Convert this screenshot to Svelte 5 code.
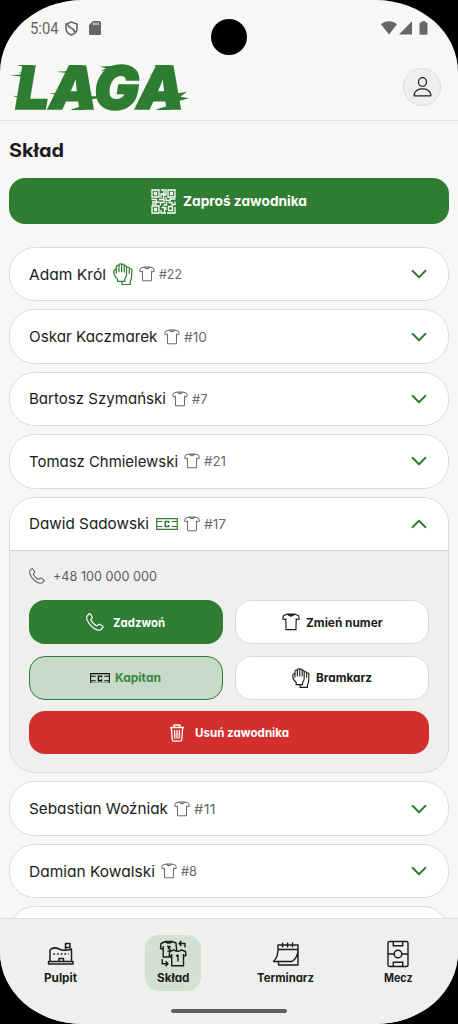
<script>
  const players = [
    { name: 'Adam Król', w: 77, num: '#22', nw: 23, role: 'glove' },
    { name: 'Oskar Kaczmarek', w: 128.5, num: '#10', nw: 23 },
    { name: 'Bartosz Szymański', w: 137, num: '#7', nw: 15.5 },
    { name: 'Tomasz Chmielewski', w: 149, num: '#21', nw: 22 },
    { name: 'Dawid Sadowski', w: 120, num: '#17', nw: 22, role: 'band', open: true },
    { name: 'Sebastian Woźniak', w: 139, num: '#11', nw: 21.5 },
    { name: 'Damian Kowalski', w: 126, num: '#8', nw: 16 }
  ];

  // Widens the letterforms so that the label takes the given width.
  function fit(node, width) {
    node.style.display = 'inline-block';
    const natural = node.getBoundingClientRect().width;
    node.style.width = natural + 'px';
    node.style.transformOrigin = '0 50%';
    node.style.transform = `scaleX(${width / natural})`;
    node.style.marginRight = width - natural + 'px';
  }
</script>

{#snippet shirt(size)}
  <svg class="ic" width={size} height={size} viewBox="0 0 16 16" fill="none" stroke="currentColor" stroke-width="1" stroke-linejoin="round">
    <path d="M5.2 1 1.4 2.2.6 5.2l2.8.8.2 8.8h8.8l.2-8.8 2.8-.8-.8-3L10.8 1C10 3.4 6 3.4 5.2 1Z" />
    <path d="M5.2 1h5.6M5.2 1.2C6.5 2.4 9.5 2.4 10.8 1.2M3.4 6V4.6M12.6 6V4.6" />
  </svg>
{/snippet}

{#snippet glove(w)}
  <svg class="ic" width={w} height={w * 1.12} viewBox="0 0 19.5 21.8" fill="none" stroke="currentColor" stroke-width="1.2" stroke-linejoin="round" stroke-linecap="round">
    <path d="M4.500 18V15.700C2.500 14 .8 11.700.8 8.700c0-1.900.8-2.800 2.400-2.300V4c0-1.400 1-2 2.600-1.600V2c.3-1.300 1.700-1.500 2.600-.6.900-.7 2.400-.5 2.600.7v.6c1.200-.4 2.200 0 2.200 1.300v7.500c0 1.800-.8 2.700-1.700 4V18Z" />
    <path d="M3.200 6.400v3.500M5.800 2.400v6.200M8.400 1.500v7.100M11 2.700v6" />
    <path d="M13.200 4h1.300c1 0 1.500.4 1.500 1.400 1.200-.2 2.500.1 2.400 1.400l-.4 8c-.2 1.400-.7 2-1.200 3V21H8.700v-3M16 5.500l-.2 4.500" />
  </svg>
{/snippet}

{#snippet band(w)}
  <svg class="ic" width={w} height={w * 0.546} viewBox="0 0 22 12" fill="none" stroke="currentColor" stroke-width="1.2">
    <path d="M.7.7h20.6v10.6H.7ZM.7 3.500h5.600M15.700 3.500h5.600M.7 8.500h5.600M15.700 8.500h5.600" />
    <path stroke-width="1.500" d="M12.700 5V3.500H9.300v5h3.400V7" />
  </svg>
{/snippet}

{#snippet phone(size)}
  <svg class="ic" width={size} height={size} viewBox="0 0 18 18" fill="none" stroke="currentColor" stroke-width="1.15" stroke-linejoin="round">
    <path d="M1.2 2.8 2.9 1c.5-.5 1-.4 1.4.1l1.9 2.7c.3.5.2 1-.2 1.4l-.8.7c-.5.5-.4 1.1 0 1.7 1.1 1.9 2.9 3.7 4.8 4.8.7.4 1.3.4 1.8-.1l.7-.7c.5-.5 1-.5 1.5-.2l2.7 1.9c.5.4.6.9.1 1.4L15 16.500c-1 .9-2.300.9-3.700.4C6.600 15 3 11.400 1.100 6.700.500 5.200.400 3.800 1.200 2.800Z" />
  </svg>
{/snippet}

<div class="screen">
  <div class="status">
    <span class="time" use:fit={28.5}>5:04</span>
    <svg class="shield" width="13" height="15" viewBox="0 0 13 15" fill="none" stroke="#666" stroke-width="1.6">
      <path d="M6.500 1 1 3v4c0 3.300 2.300 6 5.500 7C9.700 13 12 10.300 12 7V3ZM3 3.200c.2 2.600 1.300 3.500 3.300 4.100 2 .6 3 1.700 3.200 3.800" />
    </svg>
    <svg class="sd" width="12" height="14" viewBox="0 0 12 14">
      <path fill="#666" d="M4 0h6.500Q12 0 12 1.500v11Q12 14 10.500 14h-9Q0 14 0 12.500V4Z" />
      <path stroke="#f7f7f5" stroke-width="1.100" d="M4.700 1.500v2.600M7 1.500v2.600M9.300 1.500v2.600" />
    </svg>
    <span class="camera"></span>
    <svg class="signals" width="48" height="14" viewBox="0 0 48 14" fill="#666">
      <path d="M0 3.200C4.500-.8 11.500-.8 16 3.200L8 13.500ZM18 13.500 31 .300v13.200ZM38.500 2.500q0-1 1-1h1V.200h4v1.300h1q1 0 1 1V13q0 .8-1 .8h-6q-1 0-1-.8Z" />
    </svg>
  </div>

  <header>
    <svg class="logo" width="180" height="48" viewBox="30 188 540 144">
      <text class="logo-text" x="47" y="327" textLength="506" lengthAdjust="spacingAndGlyphs">LAGA</text>
      <path fill="#2e7d32" d="M50 194h50v15H78l6-6ZM30 225l45-3-22-5 42-1-5 22H60l12-9ZM36 286l50 4-4 12H50l9-9ZM205 194h40v20h-32l9-9ZM170 214l43-2-13-6h40l-8 17h-39l9-5ZM148 279l50-2-8 15h-30l12-8ZM250 288l60 0-25 7-30 5ZM299 199l60-4-20 16h-36l15-7ZM305 215l40-4-12 10ZM462 194h50v20h-42l9-9ZM444 222l40-3-12-7h22l-4 18h-25l8-7ZM431 279l45-3-8 15h-27l10-7ZM525 280l36-6-20 15 26 5-42 11ZM215 327l40-12v14h-40ZM470 327l40-12v14h-40Z" />
    </svg>
    <span class="avatar">
      <svg width="19" height="20" viewBox="0 0 19 20" fill="none" stroke="#222" stroke-width="1.300" stroke-linejoin="round">
        <ellipse cx="9.500" cy="5" rx="4" ry="4.300" />
        <path d="M1.200 18.800v-1.500c1-3.600 4.200-5.500 8.300-5.500s7.300 1.900 8.300 5.500v1.500Z" />
      </svg>
    </span>
  </header>

  <main>
    <h1><span use:fit={55}>Skład</span></h1>
    <button class="invite">
      <svg width="25" height="25" viewBox="0 0 25 25" fill="none" stroke="#fff" stroke-width="1.300">
        <path d="M1 1h7v7H1ZM17 1h7v7h-7ZM1 17h7v7H1ZM3.500 3.500h2v2h-2ZM19.500 3.500h2v2h-2ZM3.500 19.500h2v2h-2ZM17.500 17.500h4v4h-4ZM10 1h3v4h-3v4M15 0v6h-2.500v4M.500 10.500h5v2.500H1M1 15.200h4v-2h4.500M8 10.500h5v3H9.500v3M15 8v3.500h4V10h5.500M24 12.500v3h-3v-2h-3.500M15.500 13v3h-3M10.500 18.500h3V24M10 21v3h5M15 18v3M24 18v6h-8" />
      </svg>
      <span use:fit={124}>Zaproś zawodnika</span>
    </button>

    <div class="list">
      {#each players as p}
        <article class:open={p.open}>
          <div class="row">
            <span class="name" use:fit={p.w}>{p.name}</span>
            {#if p.role === 'glove'}<span class="role">{@render glove(20)}</span>{/if}
            {#if p.role === 'band'}<span class="role">{@render band(22)}</span>{/if}
            <span class="num">{@render shirt(16)}<span use:fit={p.nw}>{p.num}</span></span>
            <svg class="chev" width="16" height="10" viewBox="0 0 16 10" fill="none" stroke="#2e7d32" stroke-width="1.900" stroke-linecap="round" stroke-linejoin="round">
              <path d={p.open ? 'M1.500 8.200 8 1.800l6.500 6.400' : 'M1.500 1.800 8 8.200l6.500-6.400'} />
            </svg>
          </div>
          {#if p.open}
            <div class="details">
              <div class="tel">{@render phone(16)}<span use:fit={104}>+48 100 000 000</span></div>
              <div class="actions">
                <button class="call">{@render phone(18)}<span use:fit={52}>Zadzwoń</span></button>
                <button>{@render shirt(18)}<span use:fit={76.5}>Zmień numer</span></button>
                <button class="captain">{@render band(20)}<span use:fit={46}>Kapitan</span></button>
                <button class="keeper">{@render glove(18)}<span use:fit={56}>Bramkarz</span></button>
                <button class="remove">
                  <svg width="16" height="18" viewBox="0 0 16 18" fill="none" stroke="#fff" stroke-width="1.300" stroke-linejoin="round">
                    <path d="M1 3.500h14M5 3.300V1h6v2.300M2.300 3.500l1 12.200q.1 1.500 1.400 1.500h6.600q1.300 0 1.400-1.500l1-12.200M5.500 6l.4 8.800M8 6v8.800M10.500 6l-.4 8.800" />
                  </svg>
                  <span use:fit={94}>Usuń zawodnika</span>
                </button>
              </div>
            </div>
          {/if}
        </article>
      {/each}
      <article></article>
    </div>
  </main>

  <nav>
    <div class="tabs">
      <div class="tab">
        <svg width="28" height="28" viewBox="0 0 28 28" fill="none" stroke="#1a1c1a" stroke-width="1.500" stroke-linejoin="round">
          <path d="M3 21.500V10C5.500 7.500 9 7.500 12 9s8 1.700 12.500 0v12.500M1.500 21.500h24.500v2.500h-24.500ZM18.500 9.200V3.500h4.500v4h-4.500M12 21.500v-3h4.500v3" />
          <path stroke-width="1.700" stroke-dasharray="1.700 2" d="M6.300 14h15.500" />
        </svg>
        <span use:fit={33}>Pulpit</span>
      </div>
      <div class="tab active">
        <svg width="28" height="28" viewBox="0 0 28 28" fill="none" stroke="#1a1c1a" stroke-width="1.400" stroke-linejoin="round">
          <path d="M4.200 17V9L1.500 8.500 2 3.500 6.500 1.500c1.500 2.200 5 2.200 6.500 0L17 3l.5 6V17ZM6.500 1.500H13M4.200 9V6M8 6.500h3l-1.500 2c2.500 0 2 3.200-1 2.500" />
          <path class="front" d="m15 9.800-4.300 1.700-.5 4 2.500.7v9.600h11.800v-9.600l2.500-.7-.5-4-4.300-1.700c-1 2-6.200 2-7.200 0ZM12.700 16v-2M24.500 16v-2" />
          <path d="M17 16l2-1v6.500M22.500 1 20 3.500l2.500 2.500M20.200 3.500H26V7.500M3.200 19v4.800H9M6.500 21.300 9 23.800l-2.500 2.500" />
        </svg>
        <span use:fit={32.5}>Skład</span>
      </div>
      <div class="tab">
        <svg width="28" height="28" viewBox="0 0 28 28" fill="none" stroke="#1a1c1a" stroke-width="1.400" stroke-linejoin="round">
          <path d="M6 9.500V5h20v20H6.500V21.500M6 9.500h20M6 9.500c0 5-1.500 9-4.500 12H20c4-2.600 6-6 6-12M10.500 2.500v5M15.500 2.500v5M20.500 2.500v5" />
        </svg>
        <span use:fit={57}>Terminarz</span>
      </div>
      <div class="tab">
        <svg width="28" height="28" viewBox="0 0 28 28" fill="none" stroke="#1a1c1a" stroke-width="1.400">
          <rect x="4" y="1.500" width="20" height="25" rx="1.500" />
          <circle cx="14" cy="14" r="3.800" />
          <path d="M4 14h6.200M17.800 14H24M9.300 1.500v4.300h9.400V1.500M9.300 26.500v-4.300h9.400v4.300" />
        </svg>
        <span use:fit={28.5}>Mecz</span>
      </div>
    </div>
    <span class="home"></span>
  </nav>
</div>

<style>
  :global(body) { margin: 0; background: #000; }
  .screen {
    width: 458px; height: 1024px; overflow: hidden;
    display: flex; flex-direction: column;
    background: #f7f7f5; color: #1a1c1a;
    border-radius: 82px / 72px;
    font-family: Inter, "Open Sans", sans-serif;
    font-feature-settings: "cv11";
  }
  svg { display: block; flex: none; }
  span { white-space: nowrap; }
  .status { height: 56px; flex: none; display: flex; align-items: center; padding: 0 29px 0 30px; box-sizing: border-box; position: relative; }
  .time { font: 16px Roboto, sans-serif; color: #666; }
  .shield { margin-left: 6px; }
  .sd { margin-left: 11.500px; }
  .camera { position: absolute; left: 211px; top: 19px; width: 36px; height: 36px; border-radius: 50%; background: #000; }
  .signals { margin-left: auto; }
  header { height: 65px; flex: none; box-sizing: border-box; border-bottom: 1px solid #e4e5e3; display: flex; justify-content: space-between; align-items: flex-start; padding: 7px 17px 0 10px; }
  .logo { overflow: visible; }
  .logo-text { font: italic 900 178px Inter, sans-serif; fill: #2e7d32; stroke: #2e7d32; stroke-width: 5px; }
  .avatar { width: 36px; height: 36px; margin-top: 5px; border: 1px solid #dcdddb; border-radius: 50%; background: #efefed; display: grid; place-items: center; }
  main { flex: 1; min-height: 0; overflow: hidden; padding: 0 9px 0 8.500px; }
  h1 { margin: 17px 0 16px; font-size: 18.500px; line-height: 24px; font-weight: 700; }
  button { font: inherit; color: #1a1c1a; margin: 0; padding: 0; border: 1px solid #d8dad7; background: #fff; border-radius: 16px; display: flex; align-items: center; justify-content: center; box-sizing: border-box; font-weight: 650; font-size: 12px; gap: 6px; }
  .invite { width: 100%; height: 46px; background: #2e7d32; border: 0; color: #fff; font-size: 13.500px; font-weight: 700; gap: 7px; }
  .list { margin-top: 23px; display: flex; flex-direction: column; gap: 8px; }
  article { box-sizing: border-box; flex: none; height: 54.400px; border: 1px solid #dadcd9; border-radius: 26px; background: #fff; overflow: hidden; }
  article.open { height: 276.900px; background: #efefed; }
  .row { height: 52.400px; display: flex; align-items: center; padding: 0 21.500px 0 19.500px; background: #fff; }
  .name { font-size: 15px; }
  .role { color: #2e7d32; margin-left: 7px; }
  .num { margin-left: 6px; display: flex; align-items: center; gap: 4px; color: #666966; font-size: 13px; }
  .chev { margin-left: auto; }
  .details { border-top: 1px solid #d5d7d4; padding: 17px 19px 0; }
  .tel { height: 17px; display: flex; align-items: center; gap: 8.500px; color: #5c5f5c; font-size: 13px; }
  .actions { margin-top: 15.500px; display: grid; grid-template-columns: 1fr 1fr; grid-template-rows: 44px 44px 43px; gap: 11.500px 12px; }
  .call { background: #2e7d32; border: 0; color: #fff; gap: 9px; }
  .captain { background: #c8dac8; border-color: #2e7d32; color: #3a873d; gap: 5px; }
  .captain :global(.ic) { color: #111; }
  .remove { grid-column: 1 / 3; background: #d32f2f; border: 0; color: #fff; gap: 10px; }
  nav { height: 106px; flex: none; box-sizing: border-box; background: #efefed; border-top: 1px solid #dfe0de; display: flex; flex-direction: column; align-items: center; padding-top: 15.500px; }
  .tabs { width: 100%; display: flex; justify-content: space-between; box-sizing: border-box; padding: 0 32px 0 32.500px; }
  .tab { width: 56px; height: 56px; border-radius: 14px; display: flex; flex-direction: column; align-items: center; padding-top: 5px; box-sizing: border-box; font-size: 11.500px; line-height: 14px; font-weight: 650; gap: 3px; }
  .active { background: #d3e1d2; }
  .front { fill: #d3e1d2; }
  .home { width: 116px; height: 4px; margin-top: 18px; border-radius: 2px; background: #5f5f5f; }
</style>
